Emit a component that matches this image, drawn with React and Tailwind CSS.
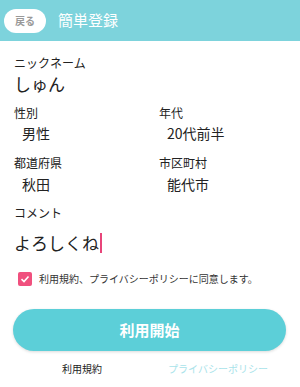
export default function App() {
  const font = { fontFamily: '"Noto Sans CJK JP", "Noto Sans", sans-serif' }

  return (
    <div style={font} className="w-[300px] h-[387px] bg-white overflow-hidden text-[#222]">
      <div className="h-[41px] bg-[#7dd3dc] flex items-center pl-[4px]">
        <button className="h-[24px] w-[42px] rounded-full bg-white text-[10px] font-bold text-[#999] flex items-center justify-center">戻る</button>
        <h1 className="ml-[12px] text-[15px] text-white">簡単登録</h1>
      </div>

      <div className="px-[14px] pt-[14px]">
        <div className="text-[12px] leading-[16px]">ニックネーム</div>
        <div className="text-[17px] leading-[22px] mt-[2px]">しゅん</div>

        <div className="grid grid-cols-2 mt-[10px]">
          <div>
            <div className="text-[12px] leading-[16px]">性別</div>
            <div className="text-[14px] leading-[20px] mt-[2px] pl-[8px]">男性</div>
          </div>
          <div className="pl-[9px]">
            <div className="text-[12px] leading-[16px]">年代</div>
            <div className="text-[14px] leading-[20px] mt-[2px] pl-[8px]">20代前半</div>
          </div>
        </div>

        <div className="grid grid-cols-2 mt-[12px]">
          <div>
            <div className="text-[12px] leading-[16px]">都道府県</div>
            <div className="text-[14px] leading-[20px] mt-[3px] pl-[8px]">秋田</div>
          </div>
          <div className="pl-[9px]">
            <div className="text-[12px] leading-[16px]">市区町村</div>
            <div className="text-[14px] leading-[20px] mt-[3px] pl-[8px]">能代市</div>
          </div>
        </div>

        <div className="text-[12px] leading-[16px] mt-[11px]">コメント</div>
        <div className="flex items-center mt-[11px] h-[22px]">
          <span className="text-[17px] leading-[22px]">よろしくね</span>
          <span className="w-[2px] h-[20px] bg-[#e8457a] ml-[1px]" />
        </div>

        <label className="flex items-center mt-[17px] pl-[4px]">
          <span className="w-[14px] h-[14px] rounded-[2px] bg-[#f0507e] flex items-center justify-center">
            <svg width="10" height="10" viewBox="0 0 10 10">
              <path d="M1.5 5.2 L4 7.5 L8.5 2.5" fill="none" stroke="white" strokeWidth="1.6" />
            </svg>
          </span>
          <span className="ml-[7px] text-[10px] text-[#333]">利用規約、プライバシーポリシーに同意します。</span>
        </label>

        <button className="w-[273px] h-[42px] mt-[23px] -ml-[1px] rounded-full bg-[#5ccfd8] text-white text-[15px] font-bold shadow-[0_1px_3px_rgba(0,0,0,0.15)]">利用開始</button>

        <div className="grid grid-cols-2 mt-[10px] text-[10px] text-center">
          <span className="text-[#222]">利用規約</span>
          <span className="text-[#a9e3ea]">プライバシーポリシー</span>
        </div>
      </div>
    </div>
  )
}
